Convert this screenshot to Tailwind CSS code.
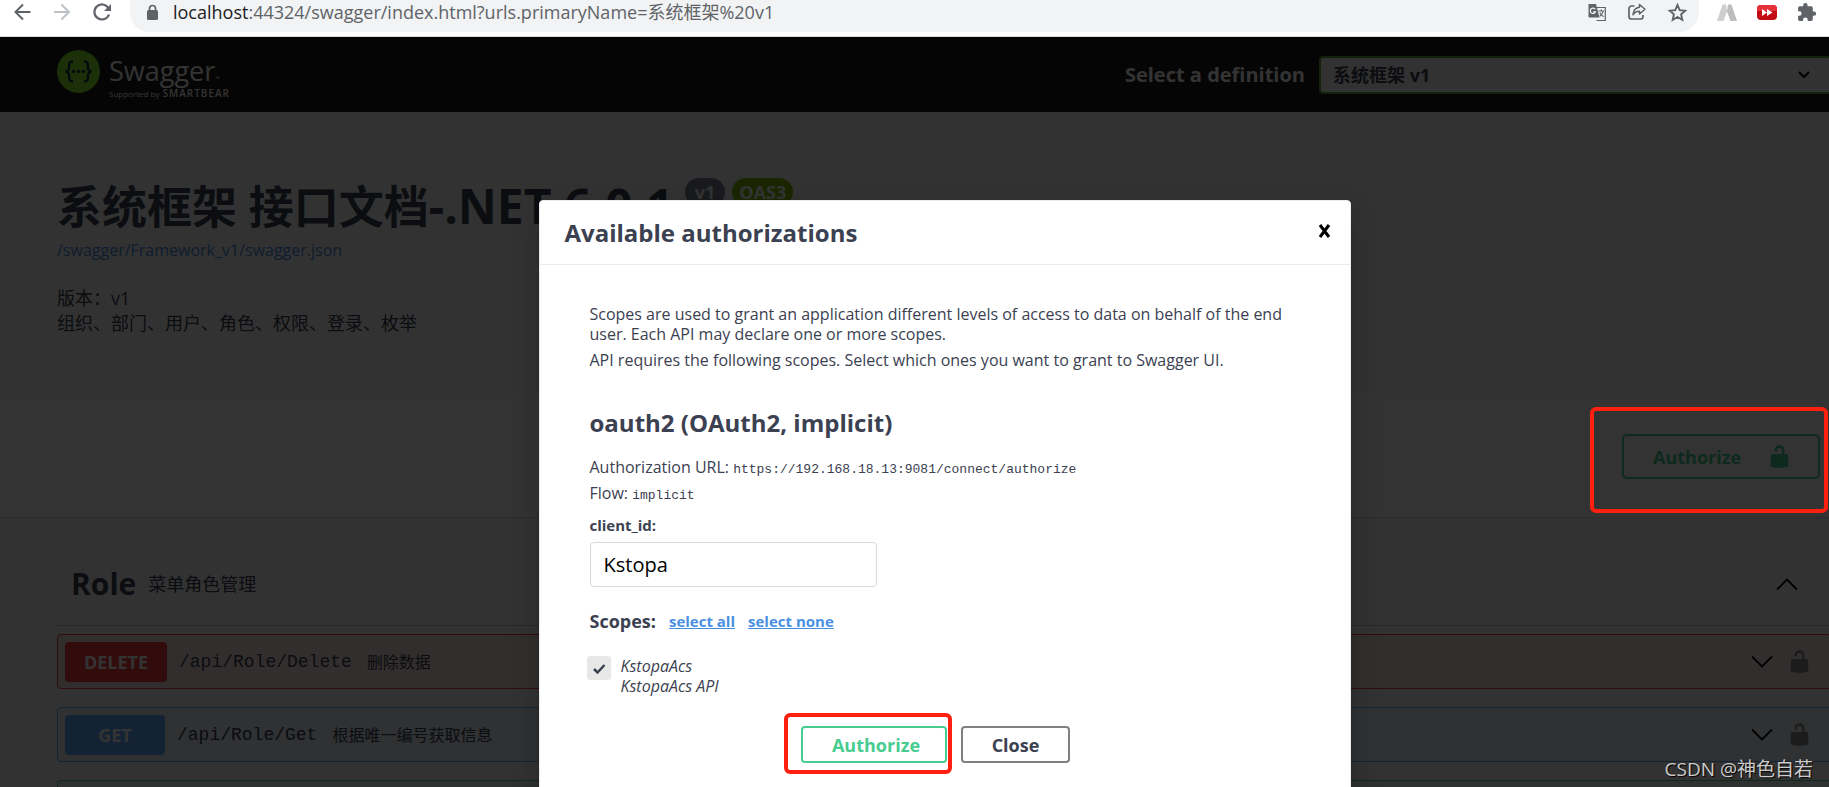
<!DOCTYPE html>
<html lang="zh-CN">
<head>
<meta charset="utf-8">
<title>Swagger UI</title>
<script src="https://cdn.jsdelivr.net/npm/@tailwindcss/browser@4"></script>
</head>
<body class="h-screen overflow-hidden flex flex-col bg-white text-[#3b4151] font-['Open_Sans','Noto_Sans_CJK_SC',sans-serif]">

<svg class="hidden" aria-hidden="true">
  <symbol id="unlocked" viewBox="0 0 20 20"><path d="M15.8 8H14V5.6C14 2.703 12.665 1 10 1 7.334 1 6 2.703 6 5.600V6h2v-.801C8 3.754 8.797 3 10 3c1.203 0 2 .754 2 2.199V8H4c-.553 0-1 .646-1 1.199V17c0 .549.428 1.139.951 1.307l1.197.387C5.672 18.861 6.550 19 7.100 19h5.800c.549 0 1.428-.139 1.951-.307l1.196-.387c.524-.167.953-.757.953-1.306V9.199C17 8.646 16.352 8 15.800 8z"/></symbol>
  <symbol id="chevron" viewBox="0 0 22 14"><path d="M1 1.500 11 11.500 21 1.500" fill="none" stroke="#000" stroke-width="1.800"/></symbol>
</svg>

<!-- Browser toolbar -->
<header class="h-[37px] shrink-0 flex items-start border-b border-[#dadce0] bg-white text-[#5f6368]">
  <div class="w-[130px] shrink-0 flex pl-3 gap-[20px]">
    <button aria-label="Back" class="h-6 w-5"><svg class="w-5 h-6" viewBox="0 0 20 24" fill="none" stroke="currentColor" stroke-width="2"><path d="M18.500 12H4M11 4.500 3.500 12l7.500 7.500"/></svg></button>
    <button aria-label="Forward" class="h-6 w-5 text-[#bdc1c6]"><svg class="w-5 h-6" viewBox="0 0 20 24" fill="none" stroke="currentColor" stroke-width="2"><path d="M2 12h14.500M9.500 4.500 17 12l-7.500 7.500"/></svg></button>
    <button aria-label="Reload" class="h-6 w-5"><svg class="w-5 h-6" viewBox="0 0 20 24" fill="none"><path d="M16.300 8A7.500 7.500 0 1 0 17 14.500" stroke="currentColor" stroke-width="2.200"/><path d="M19 4v7h-7z" fill="currentColor"/></svg></button>
  </div>
  <div class="h-8 flex-1 min-w-0 flex items-start rounded-b-[20px] bg-[#f1f3f4] pl-4 pr-3">
    <svg class="w-[13px] h-6 shrink-0" viewBox="0 0 13 24" fill="currentColor"><rect x="1" y="10" width="11" height="10" rx="1.500"/><path d="M3.500 10V8.500a3 3 0 0 1 6 0V10" fill="none" stroke="currentColor" stroke-width="1.700"/></svg>
    <p class="pl-[14px] text-lg leading-6 flex-1 truncate"><span class="text-[#202124]">localhost</span>:44324/swagger/index.html?urls.primaryName=系统框架%20v1</p>
    <div class="flex gap-5 shrink-0">
      <button aria-label="Translate" class="w-5 h-6"><svg class="w-5 h-6" viewBox="0 0 20 24"><path d="M9 7.500h9.300v13H9.500" fill="none" stroke="currentColor" stroke-width="1.200"/><path d="M1.500 4H9l3.500 13.500H2.500a1 1 0 0 1-1-1z" fill="currentColor"/><path d="M8.300 9.300a2.700 2.700 0 1 0 .2 2.500H6.300" fill="none" stroke="#f1f3f4" stroke-width="1.200"/><path d="M11.500 11h5.800M14.300 9.600V11m1.900 0c-.4 2.400-1.800 4-3.500 5.200m.2-3.500c.9 1.800 2 3 3.700 4" fill="none" stroke="currentColor" stroke-width="1.200"/></svg></button>
      <button aria-label="Share" class="w-5 h-6"><svg class="w-5 h-6" viewBox="0 0 20 24" fill="none" stroke="currentColor" stroke-width="1.700"><path d="M7.500 6H4.500a2.500 2.500 0 0 0-2.500 2.500v8A2.500 2.500 0 0 0 4.500 19h9a2.500 2.500 0 0 0 2.500-2.500V15"/><path d="M12.500 4.500 18 9.300l-5.500 4.700v-2.700c-3 0-5 1-6.500 3.500.3-4 2.500-7 6.500-7.500z" stroke-width="1.500" stroke-linejoin="round"/></svg></button>
      <button aria-label="Bookmark" class="w-5 h-6"><svg class="w-5 h-6" viewBox="0 0 20 24" fill="none" stroke="currentColor" stroke-width="1.900"><path d="m10.500 5 2.200 5.200 5.600.5-4.200 3.700 1.200 5.500-4.800-2.900-4.800 2.900 1.200-5.500-4.200-3.700 5.600-.5z"/></svg></button>
    </div>
  </div>
  <div class="w-[130px] shrink-0 flex gap-5 pl-[18px]">
    <button aria-label="Extension A" class="w-5 h-6"><svg class="w-5 h-6" viewBox="0 0 20 24"><path d="M5.500 4.500H9l1 7L6.500 21H0z" fill="#cfcfcf"/><path d="M11 4.500h3.500L20 21h-6.500L10 11.500z" fill="#bdbdbd"/></svg></button>
    <button aria-label="Video speed" class="w-5 h-6"><svg class="w-5 h-6" viewBox="0 0 20 24"><rect y="5" width="20" height="15" rx="4" fill="#c30d14"/><path d="M0 11V9a4 4 0 0 1 4-4h12a4 4 0 0 1 4 4v2z" fill="#e5323a"/><path d="m5 9 5 3.500L5 16zM10 9l5.500 3.500L10 16z" fill="#fff"/></svg></button>
    <button aria-label="Extensions" class="w-5 h-6"><svg class="w-5 h-6" viewBox="0 0 20 24" fill="currentColor"><path d="M17 11.500h-1.200V8a1.700 1.700 0 0 0-1.700-1.700h-3.500V5.300a2.200 2.200 0 0 0-4.400 0v1H2.800A1.700 1.700 0 0 0 1.100 8v3.200h1.200a2.300 2.300 0 0 1 0 4.600H1.100v3.500A1.700 1.700 0 0 0 2.800 21h3.300v-1.200a2.300 2.300 0 0 1 4.600 0V21h3.400a1.700 1.700 0 0 0 1.700-1.700v-3.500H17a2.150 2.150 0 0 0 0-4.300z"/></svg></button>
  </div>
</header>

<!-- Page viewport; its content is wider than the window and is cut off on the right -->
<div class="flex-1 min-h-0 overflow-hidden">
<div class="relative h-full w-[calc(100%+60px)] bg-[#fafafa]">

  <div class="h-[75px] bg-[#1b1b1b] px-[57px] flex items-center justify-between">
    <a href="#" class="flex gap-[9px] text-white">
      <svg class="w-[43px] h-[43px]" viewBox="0 0 43 43"><circle cx="21.500" cy="21.500" r="21.500" fill="#85ea2d"/><g fill="none" stroke="#173647" stroke-width="2.500"><path d="M16 11.500c-3.500 0-3.800 1.200-3.800 3.500 0 3.500 0 6-3.700 6.500 3.700.5 3.700 3 3.700 6.500 0 2.500.3 3.500 3.800 3.500"/><path d="M27 11.500c3.500 0 3.800 1.200 3.800 3.500 0 3.500 0 6 3.700 6.500-3.700.5-3.700 3-3.700 6.500 0 2.500-.3 3.500-3.800 3.500"/></g><g fill="#173647"><circle cx="16.500" cy="21.500" r="1.700"/><circle cx="21.500" cy="21.500" r="1.700"/><circle cx="26.500" cy="21.500" r="1.700"/></g></svg>
      <span class="flex flex-col gap-1 pt-2">
        <span class="text-[27px] leading-[26px]">Swagger<span class="text-[6px] leading-none">™</span></span>
        <span class="text-[8px] leading-[10px] whitespace-nowrap">Supported by <b class="pl-px text-[10px] leading-none tracking-widest font-semibold">SMARTBEAR</b></span>
      </span>
    </a>
    <div class="flex items-center gap-[14px]">
      <label for="definition" class="text-xl font-bold text-white">Select a definition</label>
      <div class="relative">
        <select id="definition" class="appearance-none w-[513px] h-[38px] rounded border-2 border-[#62a03f] bg-[#f7f7f7] pl-3 text-lg leading-6 font-bold text-[#3b4151]"><option>系统框架 v1</option></select>
        <svg class="absolute right-[22px] top-[15px] w-3 h-2" viewBox="0 0 12 8"><path d="m1 1 5 5 5-5" fill="none" stroke="#000" stroke-width="2"/></svg>
      </div>
    </div>
  </div>

  <section class="h-[284px] px-[57px] pt-[65px]">
    <h2 class="flex items-start gap-[11px] text-[45px] leading-[60px] font-bold whitespace-nowrap"><span>系统框架 接口文档<span class="text-5xl leading-none">-.NET 6.0.1</span></span>
      <span class="flex gap-[7px] pt-px text-lg leading-7 text-white"><span class="rounded-full bg-[#7d8492] px-[10px]">v1</span><span class="rounded-full bg-[#89bf04] px-[7px]">OAS3</span></span>
    </h2>
    <a href="#" class="block mt-[3px] text-base leading-5 text-[#4990e2]">/swagger/Framework_v1/swagger.json</a>
    <p class="mt-[26px] text-lg leading-[25px]">版本：v1<br>组织、部门、用户、角色、权限、登录、枚举</p>
  </section>

  <section class="h-[121px] bg-white px-[57px] pt-[38px] flex justify-end items-start shadow-[0_1px_2px_rgba(0,0,0,0.15)]">
    <div class="relative mr-3">
      <button class="w-[198px] h-[45px] rounded-[5px] border-2 border-[#49cc90] pl-[29px] pr-[26px] flex items-center justify-between text-lg font-bold text-[#49cc90]">Authorize<svg class="w-[25px] h-[25px]" fill="#49cc90"><use href="#unlocked"/></svg></button>
      <div class="absolute z-20 -left-8 -right-2 -top-[27px] -bottom-[34px] rounded-md border-4 border-[#ff2010] pointer-events-none"></div>
    </div>
  </section>

  <main class="px-[57px] pt-[26px]">
    <h3 class="h-[83px] border-b border-[#3b4151]/30 flex items-center pl-[14px] pr-[34px] text-3xl font-bold">Role<small class="pl-3 flex-1 text-lg font-normal">菜单角色管理</small>
      <button aria-label="Collapse Role"><svg class="w-[22px] h-[14px] rotate-180"><use href="#chevron"/></svg></button></h3>

    <div class="mt-2 flex flex-col gap-[18px]">
      <div class="h-[55px] rounded border border-[#f93e3e] bg-[#f93e3e]/10 flex items-center pl-[7px] pr-[19px]">
        <button class="w-[102px] h-10 rounded bg-[#f93e3e] text-lg font-bold text-white">DELETE</button>
        <span class="pl-3 font-['Liberation_Mono',monospace] text-lg">/api/Role/Delete</span>
        <span class="pl-[15px] flex-1 text-base">删除数据</span>
        <button aria-label="Expand"><svg class="w-[22px] h-[14px]"><use href="#chevron"/></svg></button>
        <button aria-label="Authorization" class="pl-[14px]"><svg class="w-[25px] h-[25px]" fill="#8c8c8c"><use href="#unlocked"/></svg></button>
      </div>
      <div class="h-[55px] rounded border border-[#61affe] bg-[#61affe]/10 flex items-center pl-[7px] pr-[19px]">
        <button class="w-[100px] h-10 rounded bg-[#61affe] text-lg font-bold text-white">GET</button>
        <span class="pl-3 font-['Liberation_Mono',monospace] text-lg">/api/Role/Get</span>
        <span class="pl-[15px] flex-1 text-base">根据唯一编号获取信息</span>
        <button aria-label="Expand"><svg class="w-[22px] h-[14px]"><use href="#chevron"/></svg></button>
        <button aria-label="Authorization" class="pl-[14px]"><svg class="w-[25px] h-[25px]" fill="#8c8c8c"><use href="#unlocked"/></svg></button>
      </div>
      <div class="h-[55px] rounded border border-[#49cc90] bg-[#49cc90]/10"></div>
    </div>
  </main>

  <!-- Authorization dialog -->
  <div class="absolute inset-0 z-10 overflow-hidden bg-black/80 flex items-start justify-center pt-[163px]">
    <div role="dialog" aria-labelledby="dlg-title" class="w-[812px] rounded border border-[#ebebeb] bg-white shadow-[0_10px_30px_rgba(0,0,0,0.2)]">
      <div class="h-16 border-b border-[#ebebeb] pl-[25px] pr-[19px] flex items-center justify-between">
        <h3 id="dlg-title" class="text-2xl font-bold">Available authorizations</h3>
        <button aria-label="Close dialog" class="pb-1"><svg class="w-[13px] h-[14px]" viewBox="0 0 13 14"><path d="m2 1 9 12m0-12-9 12" stroke="#000" stroke-width="3"/></svg></button>
      </div>
      <div class="px-[50px] pt-[39px] pb-24 text-base leading-5">
        <p>Scopes are used to grant an application different levels of access to data on behalf of the end user. Each API may declare one or more scopes.</p>
        <p class="mt-1.5">API requires the following scopes. Select which ones you want to grant to Swagger UI.</p>
        <h4 class="mt-[38px] text-2xl leading-[30px] font-bold">oauth2 (OAuth2, implicit)</h4>
        <p class="mt-[19px]">Authorization URL: <code class="font-['Liberation_Mono',monospace] text-[13px] leading-none">https://192.168.18.13:9081/connect/authorize</code></p>
        <p class="mt-1.5">Flow: <code class="font-['Liberation_Mono',monospace] text-[13px] leading-none">implicit</code></p>
        <label for="client" class="mt-3 block text-[15px] leading-5 font-bold">client_id:</label>
        <input id="client" type="text" value="Kstopa" class="mt-[7px] block w-[287px] h-[45px] rounded border border-[#d9d9d9] px-[13px] text-xl text-black">
        <div class="mt-[22px] flex items-center text-[15px] leading-6 font-bold"><h5 class="text-lg leading-6">Scopes:</h5><a href="#" class="ml-[13px] text-[#4990e2] underline">select all</a><a href="#" class="ml-[13px] text-[#4990e2] underline">select none</a></div>
        <div class="mt-[23px] flex items-start">
          <span class="relative -ml-[3px] w-6 h-6 shrink-0">
            <input id="scope" type="checkbox" checked class="block appearance-none w-6 h-6 rounded-[3px] bg-[#e8e8e8]">
            <svg class="absolute inset-0 w-6 h-6 pointer-events-none" viewBox="0 0 24 24"><path d="m7 13 3.500 3.500 7-7.500" fill="none" stroke="#3b4151" stroke-width="2.500"/></svg>
          </span>
          <label for="scope" class="pl-[10px] italic">KstopaAcs<br>KstopaAcs API</label>
        </div>
        <div class="mt-[30px] pr-[18px] flex justify-center gap-[14px] text-lg font-bold">
          <div class="relative">
            <button class="w-[146px] h-[37px] pl-1 rounded border-2 border-[#49cc90] text-[#49cc90]">Authorize</button>
            <div class="absolute -left-[17px] -right-[5px] -top-[13px] -bottom-[11px] rounded-md border-4 border-[#ff2010] pointer-events-none"></div>
          </div>
          <button class="w-[109px] h-[37px] rounded border-2 border-[#808080]">Close</button>
        </div>
      </div>
    </div>
  </div>

  <p class="absolute z-20 right-[76px] bottom-1 text-[19px] leading-7 text-[#cccccc] [text-shadow:1px_1px_1px_#000]">CSDN @神色自若</p>
</div>
</div>
</body>
</html>
